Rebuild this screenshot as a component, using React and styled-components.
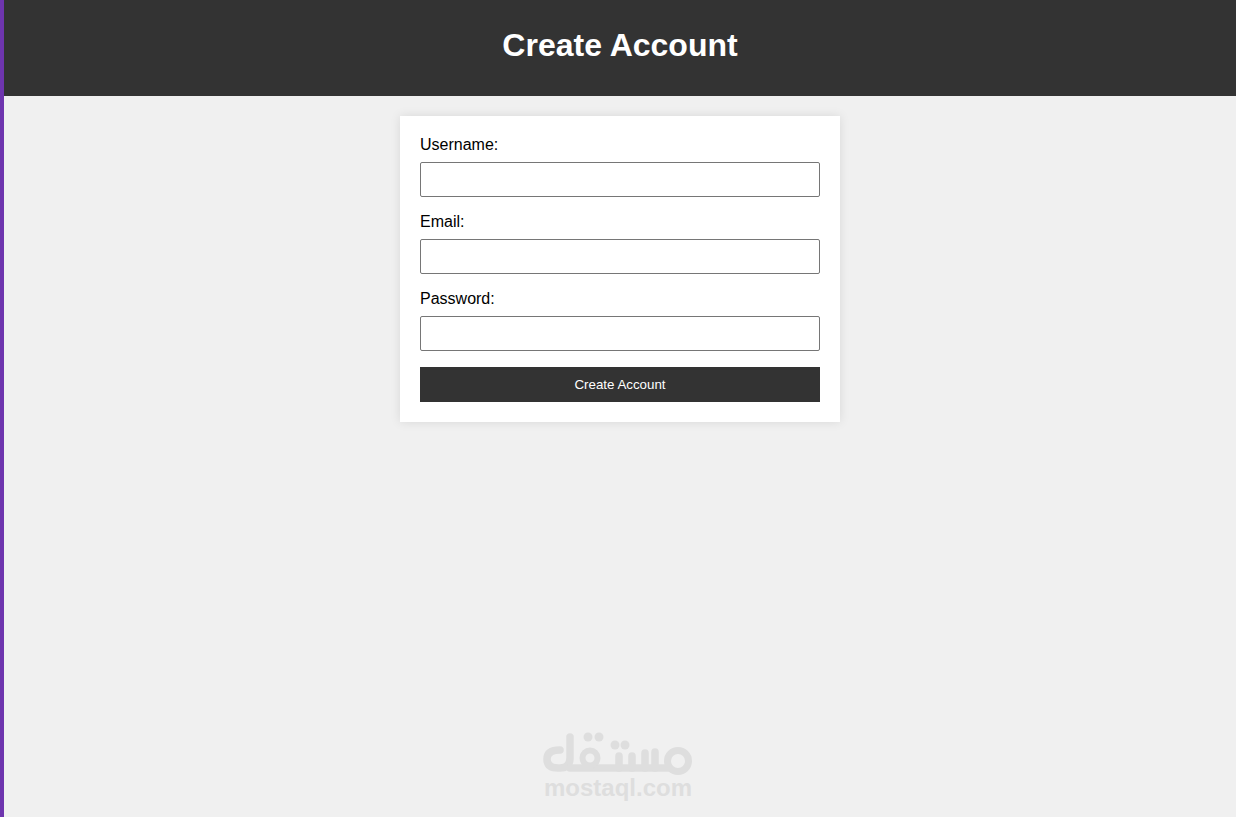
import React from "react";
import styled, { createGlobalStyle } from "styled-components";

const Global = createGlobalStyle`
  html, body { margin: 0; padding: 0; height: 100%; }
  body { font-family: "Liberation Sans", Arial, sans-serif; background: #f0f0f0; color: #000; }
  #root { height: 100%; }
`;

const Page = styled.div`
  position: relative;
  box-sizing: border-box;
  height: 817px;
  overflow: hidden;
  border-left: 4px solid #6e35ae;
`;

const Header = styled.header`
  box-sizing: border-box;
  height: 96px;
  padding-top: 27px;
  background: #333;
  color: #fff;
  text-align: center;
`;

const Title = styled.h1`
  margin: 0;
  font-size: 32px;
  line-height: 37px;
  font-weight: 700;
`;

const Form = styled.form`
  box-sizing: border-box;
  width: 440px;
  margin: 20px auto 0;
  padding: 20px;
  display: flex;
  flex-direction: column;
  background: #fff;
  box-shadow: 0 0 10px rgba(0, 0, 0, 0.1);
`;

const Label = styled.label`
  display: block;
  font-size: 16px;
  line-height: 18px;
  margin-bottom: 8px;
`;

const Input = styled.input`
  box-sizing: border-box;
  display: block;
  width: 100%;
  height: 35px;
  padding: 10px;
  margin-bottom: 16px;
  background: #fff;
  border: 1px solid #767676;
  border-radius: 2px;
  outline: none;
`;

const Submit = styled.button`
  height: 35px;
  padding: 0;
  border: 0;
  background: #333;
  color: #fff;
  font-family: "Liberation Sans", Arial, sans-serif;
  font-size: 13.333px;
`;

const Watermark = styled.div`
  position: absolute;
  left: 516px;
  top: 720px;
  width: 200px;
  height: 90px;
  text-align: center;
  color: #dedede;
`;

const Logo = styled.svg`
  position: absolute;
  inset: 0;
  width: 200px;
  height: 90px;
  stroke: #dedede;
  fill: none;
`;

const Domain = styled.div`
  position: absolute;
  left: -2px;
  right: 2px;
  top: 54px;
  font-size: 24px;
  line-height: 27px;
  font-weight: 700;
`;

const fields = [
  ["username", "Username:", "text"],
  ["email", "Email:", "email"],
  ["password", "Password:", "password"],
];

export default function App() {
  return (
    <>
      <Global />
      <Page>
        <Header>
          <Title>Create Account</Title>
        </Header>
        <Form onSubmit={(e) => e.preventDefault()}>
          {fields.map(([id, label, type]) => (
            <React.Fragment key={id}>
              <Label htmlFor={id}>{label}</Label>
              <Input id={id} type={type} />
            </React.Fragment>
          ))}
          <Submit type="submit">Create Account</Submit>
        </Form>
        <Watermark>
          <Logo viewBox="520 720 200 90" aria-hidden="true">
            <g strokeWidth="7.5" strokeLinecap="round" strokeLinejoin="round">
              <path d="M570 737V758Q570 768 560 768H558Q547 768 547 759Q547 750 560 750" />
              <path d="M570 768H668" />
              <circle cx="590" cy="758" r="7.5" strokeWidth="6" />
              <path d="M619 756V768" />
              <path d="M632 756V768" />
              <path d="M645 753V768" />
              <path d="M655 752V768" />
              <circle cx="678" cy="761" r="10.5" strokeWidth="7" />
            </g>
            <g fill="#dedede" stroke="none">
              <circle cx="588" cy="737" r="4.5" />
              <circle cx="599" cy="737" r="4.5" />
              <circle cx="615" cy="745" r="4.5" />
              <circle cx="625" cy="745" r="4.5" />
            </g>
          </Logo>
          <Domain>mostaql.com</Domain>
        </Watermark>
      </Page>
    </>
  );
}
